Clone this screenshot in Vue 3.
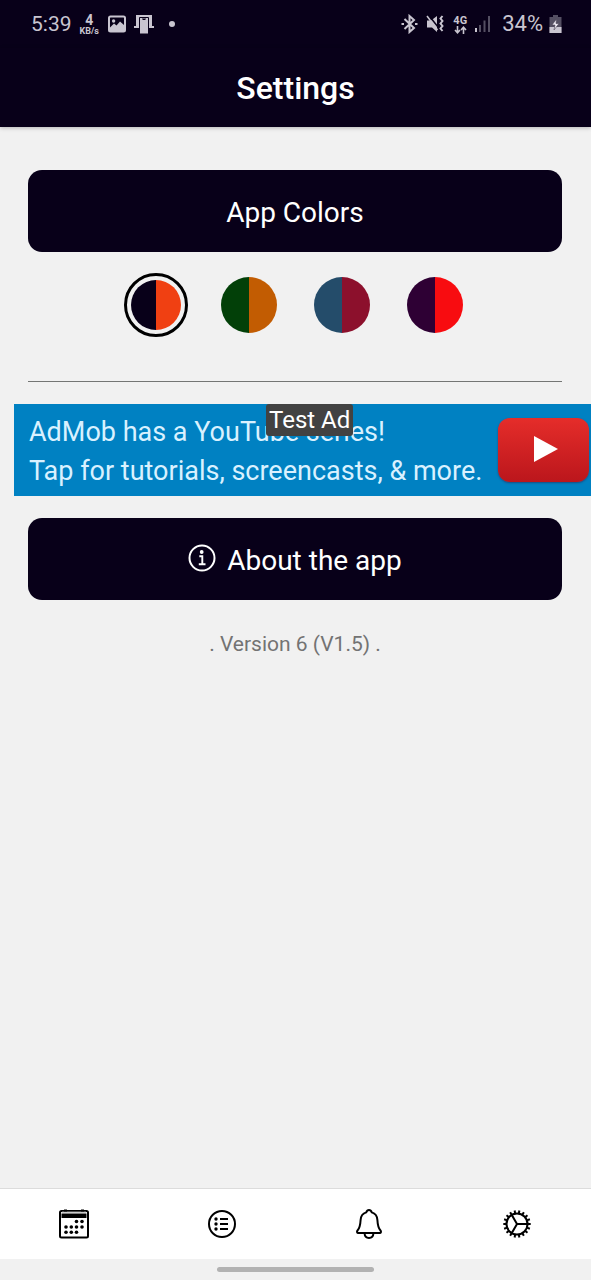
<script setup>
import { ref } from 'vue'

const selected = ref('midnight')
const themes = [
  { id: 'midnight', label: 'Midnight and orange', left: '#080019', right: '#f04012' },
  { id: 'forest', label: 'Forest and amber', left: '#024008', right: '#c25c02' },
  { id: 'ocean', label: 'Ocean and crimson', left: '#244c6a', right: '#8c102c' },
  { id: 'plum', label: 'Plum and red', left: '#2e0034', right: '#f80c10' }
]
const dots = [
  [17.5, 12.5], [23, 12.5],
  [7, 18], [12.3, 18], [17.5, 18], [23, 18],
  [7, 23.3], [12.3, 23.3], [17.5, 23.3]
]
const teeth = Array.from({ length: 18 }, (_, i) => i * 20)
</script>

<template>
  <div class="screen">
    <div class="status">
      <div class="group">
        <span class="clock">5:39</span>
        <span class="speed"><b>4</b><small>KB/s</small></span>
        <svg class="picture" width="18" height="18" viewBox="0 0 18 18">
          <rect x="1" y="1.5" width="16" height="15" rx="1.5" fill="none" stroke="currentColor" stroke-width="2" />
          <circle cx="5.6" cy="6" r="1.7" fill="currentColor" />
          <path d="M2 12.500l4-4 2.500 2L12 6.500l4 3.500V16H2z" fill="currentColor" />
        </svg>
        <svg class="device" width="20" height="20" viewBox="0 0 20 20" fill="currentColor">
          <path d="M2 1h16v11h2v2H0v-2h2z" />
          <path d="M5.500 3.500h9V20h-9z" stroke="#080019" stroke-width="1" />
          <path d="M8 4.500h4l-.8 1.500H8.800z" fill="#080019" />
        </svg>
        <span class="dot"></span>
      </div>
      <div class="group">
        <svg class="bluetooth" width="17" height="20" viewBox="0 0 17 20" fill="none" stroke="currentColor" stroke-width="2">
          <path d="M3.500 5l9.500 9-4.500 4V2L13 6 3.500 15" />
          <path d="M.5 10h2.500M14 10h2.500" />
        </svg>
        <svg class="mute" width="19" height="20" viewBox="0 0 19 20">
          <path d="M1 6.500h4l6-4.500v16l-5-4.500H1z" fill="currentColor" />
          <path d="M2.500 1l9.500 12" stroke="#080019" stroke-width="1.500" />
          <path d="M1 2l10.500 14" stroke="currentColor" stroke-width="1.500" />
          <path d="M16.500 2l-2 2.500 2 2.500-2 2.500 2 2.500-2 2.500 2 2.500" fill="none" stroke="currentColor" stroke-width="2" />
        </svg>
        <span class="network">
          <b>4G</b>
          <svg width="13" height="8" viewBox="0 0 13 8" fill="none" stroke="currentColor" stroke-width="1.600">
            <path d="M3.500 0v6.500M1 4l2.500 2.700L6 4M9.500 8V1.500M7 4l2.500-2.700L12 4" />
          </svg>
        </span>
        <svg class="signal" width="17" height="18" viewBox="0 0 17 18" fill="currentColor">
          <path d="M1 13h2v4H1z" />
          <path d="M5 10h2v7H5zM9.500 5.500h2V17h-2zM14 1h2v16h-2z" opacity=".4" />
        </svg>
        <span class="percent">34%</span>
        <svg class="battery" width="13" height="18" viewBox="0 0 13 18">
          <path d="M4 0h5v2h3.500v16H.5V2H4z" fill="currentColor" opacity=".4" />
          <path d="M.5 12h12v6H.5z" fill="currentColor" />
          <path d="M7.500 4L3 10h3l-1 5 5-6.500H7z" fill="#eeeaf3" stroke="#4b4556" stroke-width=".6" />
        </svg>
      </div>
    </div>

    <header class="header"><h1>Settings</h1></header>

    <main class="content">
      <button type="button" class="action">App Colors</button>

      <div class="themes" role="radiogroup" aria-label="App Colors">
        <input
          v-for="t in themes"
          :key="t.id"
          v-model="selected"
          type="radio"
          name="theme"
          :value="t.id"
          :aria-label="t.label"
          :style="{ '--left': t.left, '--right': t.right }"
        />
      </div>

      <hr />

      <a href="#" class="ad">
        <span class="ad-text">AdMob has a YouTube series!<br />Tap for tutorials, screencasts, &amp; more.</span>
        <span class="play">
          <svg width="26" height="26" viewBox="0 0 26 26"><path d="M1 0l24 13L1 26z" fill="#fff" /></svg>
        </span>
        <span class="ad-label">Test Ad</span>
      </a>

      <button type="button" class="action">
        <svg width="28" height="28" viewBox="0 0 28 28" fill="none" stroke="currentColor">
          <circle cx="14" cy="14" r="12.500" stroke-width="2" />
          <circle cx="13.700" cy="8" r="1.900" fill="currentColor" stroke="none" />
          <path d="M11.300 12.200h3v8M10.800 20.300h6.700" stroke-width="1.900" />
        </svg>
        <span>About the app</span>
      </button>

      <p class="version">. Version 6 (V1.5) .</p>
    </main>

    <nav class="tabs">
      <button type="button" aria-label="Calendar">
        <svg width="30" height="30" viewBox="0 0 30 30">
          <rect x="1" y="2" width="28" height="26.500" rx="1.500" fill="none" stroke="#000" stroke-width="2" />
          <path d="M2.500 4.500h25V9h-25z" />
          <path d="M3 3h24" stroke="#999" stroke-width="1" />
          <path d="M5 .5h3v2H5zM22 .5h3v2h-3z" />
          <circle v-for="d in dots" :key="d.join()" :cx="d[0]" :cy="d[1]" r="1.800" />
        </svg>
      </button>
      <button type="button" aria-label="List">
        <svg width="30" height="30" viewBox="0 0 30 30" fill="none" stroke="#000" stroke-width="2">
          <circle cx="15" cy="15" r="13" />
          <path d="M13 10h8M13 15h8M13 20h8" />
          <g fill="#000" stroke="none">
            <circle cx="9" cy="10" r="1.700" /><circle cx="9" cy="15" r="1.700" /><circle cx="9" cy="20" r="1.700" />
          </g>
        </svg>
      </button>
      <button type="button" aria-label="Notifications">
        <svg width="30" height="32" viewBox="0 0 30 32" fill="none" stroke="#000" stroke-width="2" stroke-linejoin="round">
          <path d="M15 2c-1.500 0-2.300 1-2.800 2.400C8.500 5.500 6.800 8.500 6.600 12c-.3 5.500-.6 8-3.100 10.500-.9 1-.5 2.500.8 2.500h21.400c1.300 0 1.700-1.500.8-2.500-2.500-2.500-2.800-5-3.100-10.500-.2-3.500-1.900-6.500-5.600-7.600C17.300 3 16.500 2 15 2z" />
          <path d="M10.500 25c.2 3 2 5 4.500 5s4.300-2 4.500-5" />
        </svg>
      </button>
      <button type="button" aria-label="Settings">
        <svg width="30" height="30" viewBox="0 0 30 30" fill="none" stroke="#000" stroke-width="2">
          <circle cx="15" cy="15" r="10.500" />
          <path v-for="a in teeth" :key="a" d="M15 4.500V1.300" :transform="`rotate(${a + 10} 15 15)`" />
          <path d="M15 15h10.500M15 15L9.800 5.900M15 15L9.800 24.100" />
        </svg>
      </button>
    </nav>
    <div class="home"><span></span></div>
  </div>
</template>

<style>
body {
  margin: 0;
}
</style>

<style scoped>
.screen {
  min-height: 100vh;
  display: flex;
  flex-direction: column;
  background: #f1f1f1;
  font-family: Roboto, "Liberation Sans", sans-serif;
}
.status {
  height: 48px;
  box-sizing: border-box;
  padding: 0 29px 0 31px;
  display: flex;
  align-items: center;
  justify-content: space-between;
  background: #080019;
  color: #c9c5d0;
}
.group {
  display: flex;
  align-items: center;
}
.clock,
.percent {
  font-size: 22px;
  line-height: 48px;
}
.clock {
  font-size: 21px;
}
.percent {
  margin: 0 6px 0 11px;
}
.speed {
  display: flex;
  flex-direction: column;
  align-items: center;
  margin: 0 9px 0 8px;
}
.speed b {
  font-size: 14px;
  line-height: 14px;
}
.speed small {
  font-size: 9px;
  line-height: 9px;
  font-weight: 700;
}
.device {
  margin: 0 15px 0 8px;
}
.dot {
  width: 6px;
  height: 6px;
  border-radius: 50%;
  background: currentColor;
}
.mute {
  margin: 0 8px;
}
.network {
  display: flex;
  flex-direction: column;
  align-items: center;
  margin-right: 7px;
}
.network b {
  font-size: 11px;
  line-height: 11px;
}
.header {
  height: 79px;
  background: #080019;
  box-shadow: 0 1px 4px rgba(0, 0, 0, 0.25);
  color: #fff;
  text-align: center;
}
h1 {
  margin: 0;
  font-size: 32px;
  line-height: 80px;
  font-weight: 500;
}
.content {
  flex: 1;
  display: flex;
  flex-direction: column;
  padding: 43px 29px 0 28px;
}
.action {
  height: 82px;
  border: 0;
  border-radius: 14px;
  padding: 2px 0 0;
  display: flex;
  align-items: center;
  justify-content: center;
  gap: 11px;
  background: #080019;
  color: #fff;
  font: 28px Roboto, "Liberation Sans", sans-serif;
}
.action svg {
  margin-bottom: 5px;
}
.themes {
  display: flex;
  justify-content: center;
  gap: 29px;
  margin: 21px 0 44px;
}
.themes input {
  appearance: none;
  width: 64px;
  height: 64px;
  box-sizing: border-box;
  margin: 0;
  border: 4px solid transparent;
  border-radius: 50%;
  background: linear-gradient(90deg, var(--left) 50%, var(--right) 50%) content-box;
}
.themes input:checked {
  border: 3px solid #000;
  padding: 4px;
}
hr {
  width: 100%;
  height: 1px;
  margin: 0 0 22px;
  border: 0;
  background: #747674;
}
.ad {
  position: relative;
  display: flex;
  align-items: center;
  justify-content: space-between;
  height: 92px;
  margin: 0 -29px 22px -14px;
  padding-left: 15px;
  background: #0081c2;
  color: #d9f1ff;
  text-decoration: none;
}
.ad-text {
  padding-top: 4px;
  font-size: 27px;
  line-height: 39px;
  white-space: nowrap;
}
.play {
  flex: none;
  width: 91px;
  height: 64px;
  margin-right: 2px;
  border-radius: 12px;
  display: flex;
  align-items: center;
  justify-content: center;
  background: linear-gradient(#e52d2a, #bb161c);
  box-shadow: 0 1px 2px rgba(60, 20, 60, 0.5);
}
.play svg {
  margin: 0 0 2px 5px;
}
.ad-label {
  position: absolute;
  top: 0;
  left: 252px;
  padding: 1px 3px 0;
  border-radius: 3px;
  background: #424242;
  color: #fff;
  font-size: 24px;
  line-height: 31px;
}
.version {
  margin: 30px 0 0;
  text-align: center;
  color: #737373;
  font-size: 21px;
  line-height: 28px;
}
.tabs {
  display: grid;
  grid-template-columns: repeat(4, 1fr);
  height: 70px;
  border-top: 1px solid #dcdcdc;
  background: #fff;
}
.tabs button {
  display: flex;
  align-items: center;
  justify-content: center;
  border: 0;
  padding: 0;
  background: none;
}
.home {
  height: 21px;
  display: flex;
  align-items: center;
  justify-content: center;
}
.home span {
  width: 157px;
  height: 5px;
  border-radius: 3px;
  background: #b2b2b2;
}
</style>
